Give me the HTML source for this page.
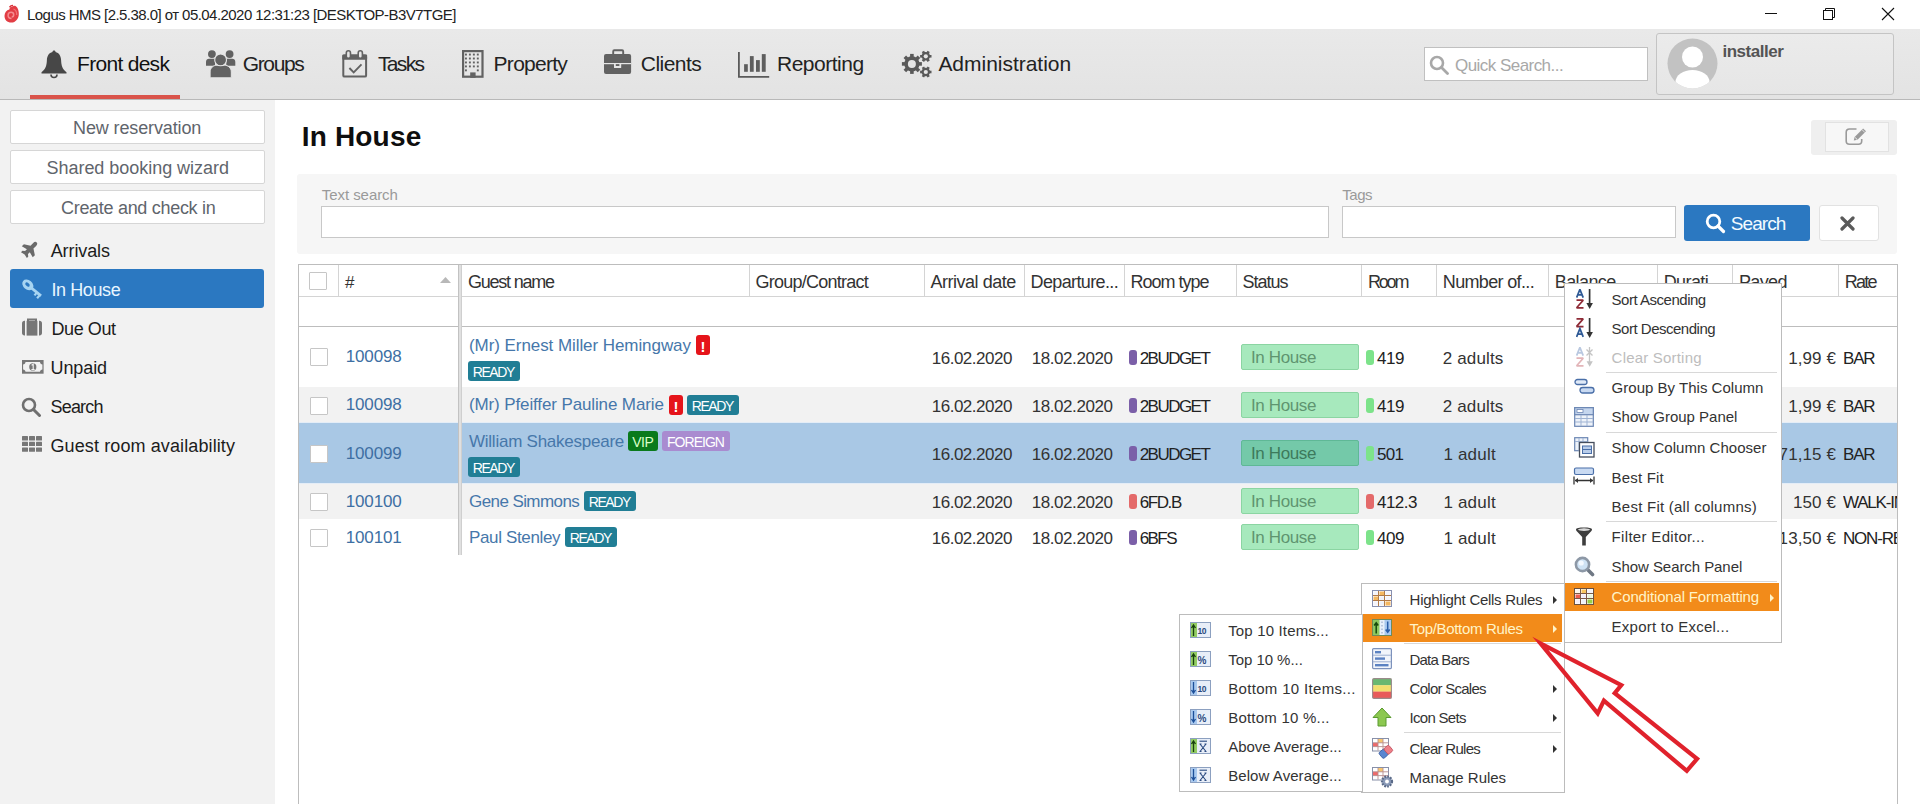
<!DOCTYPE html><html><head><meta charset="utf-8"><style>
html,body{margin:0;padding:0;width:1920px;height:804px;overflow:hidden;background:#fff}
body{position:relative;font-family:"Liberation Sans",sans-serif}
.r{position:absolute;display:block}
.t{position:absolute;white-space:nowrap;line-height:1}
.clip{position:absolute;overflow:hidden}
</style></head><body>
<div class="r" style="left:0px;top:0px;width:1920px;height:29px;background:#fff"></div>
<svg class="r" style="left:0px;top:0px" width="26" height="28" viewBox="0 0 26 28"><path d="M10 7.5c1.5-.8 3.5-2 5-1.8 2.5 1 4 4.5 3.8 8.5-.2 4.5-3 8.3-7.5 8.3-4.2 0-6.8-3-6.8-6.6 0-3 2-5.6 4.8-6.3z" fill="#e23d44"/><path d="M9.5 7.2c1.2-1.5 2.6-1.8 3.6-1.6" fill="none" stroke="#d8323a" stroke-width="1.4"/><path d="M11.5 18.5c-2 0-3.4-1.4-3.4-3.2s1.4-3 3-3 2.6 1.1 2.6 2.5-1 2.2-2 2.2" fill="none" stroke="#f58c90" stroke-width="1.5"/><path d="M13.5 9c2.2 1 3.4 3.2 3.2 6" fill="none" stroke="#f07075" stroke-width="1.3"/></svg>
<div class="t " style="left:27.00px;top:7.30px;font-size:15px;color:#222;letter-spacing:-0.55px;">Logus HMS [2.5.38.0] от 05.04.2020 12:31:23 [DESKTOP-B3V7TGE]</div>
<div class="r" style="left:1765px;top:13px;width:12px;height:1px;background:#111"></div>
<svg class="r" style="left:1822px;top:7px" width="14" height="14" viewBox="0 0 14 14"><rect x="1.5" y="3.5" width="9" height="9" fill="none" stroke="#111" stroke-width="1"/><path d="M3.5 3.5V1.5h9v9h-2" fill="none" stroke="#111" stroke-width="1"/></svg>
<svg class="r" style="left:1881px;top:7px" width="14" height="14" viewBox="0 0 14 14"><path d="M1 1L13 13M13 1L1 13" stroke="#111" stroke-width="1.1"/></svg>
<div class="r" style="left:0px;top:29px;width:1920px;height:70px;background:linear-gradient(#e9e9e9,#e3e3e3)"></div>
<div class="r" style="left:0px;top:99px;width:1920px;height:1px;background:#b8b8b8"></div>
<div class="r" style="left:30px;top:95px;width:150px;height:4px;background:#d9534a"></div>
<svg class="r" style="left:40px;top:49px" width="28" height="30" viewBox="0 0 28 30"><path d="M14 1.5c1 0 1.5.6 1.5 1.4 3.6.8 5.4 4 5.6 8 .2 5.5 1.2 9 5.4 12.3v1.3H1.5v-1.3C5.7 20 6.7 16.5 6.9 11c.2-4 2-7.2 5.6-8 0-.8.5-1.4 1.5-1.4z" fill="#474747"/><path d="M11 25.5a3 3 0 0 0 6 0" fill="none" stroke="#474747" stroke-width="1.6"/></svg>
<div class="t " style="left:77.00px;top:53.22px;font-size:21px;color:#111;letter-spacing:-0.7px;">Front desk</div>
<svg class="r" style="left:200px;top:46px" width="40" height="36" viewBox="0 0 40 36"><g fill="#626262"><circle cx="11.9" cy="8.1" r="3.9"/><circle cx="29.6" cy="8.1" r="3.9"/><path d="M6 19.7V16c0-2 1.3-3.2 3-3.2h6v6.9z"/><path d="M35.3 19.7V16c0-2-1.3-3.2-3-3.2h-6v6.9z"/></g><path d="M10.1 31.8V26c0-4.2 3.3-6.8 7-6.8h7.2c3.7 0 7 2.6 7 6.8v5.8z" fill="#626262" stroke="#e6e6e6" stroke-width="1"/><circle cx="20.6" cy="13.9" r="5.9" fill="#626262" stroke="#e6e6e6" stroke-width="1.1"/></svg>
<div class="t " style="left:242.80px;top:53.22px;font-size:21px;color:#222;letter-spacing:-1.38px;">Groups</div>
<svg class="r" style="left:338px;top:46px" width="34" height="36" viewBox="0 0 34 36"><rect x="5.3" y="9.5" width="22.8" height="21.1" rx="1.2" fill="none" stroke="#626262" stroke-width="2"/><rect x="4.3" y="8.5" width="24.8" height="5.3" rx="1" fill="#626262"/><g fill="#e6e6e6" stroke="#626262" stroke-width="1.6"><rect x="8.3" y="4.8" width="4.2" height="7.5" rx="2.1"/><rect x="20.2" y="4.8" width="4.2" height="7.5" rx="2.1"/></g><path d="M11.4 22l4.3 4.3 7.8-7.9" fill="none" stroke="#626262" stroke-width="1.9"/></svg>
<div class="t " style="left:378.00px;top:53.22px;font-size:21px;color:#222;letter-spacing:-1.675px;">Tasks</div>
<svg class="r" style="left:461px;top:49px" width="24" height="30" viewBox="0 0 24 30"><rect x="2.1" y="2.1" width="19.4" height="25.6" fill="none" stroke="#626262" stroke-width="2.2"/><g fill="#626262"><rect x="4.00" y="4.60" width="1.9" height="1.9"/><rect x="7.95" y="4.60" width="1.9" height="1.9"/><rect x="11.90" y="4.60" width="1.9" height="1.9"/><rect x="15.85" y="4.60" width="1.9" height="1.9"/><rect x="4.00" y="8.55" width="1.9" height="1.9"/><rect x="7.95" y="8.55" width="1.9" height="1.9"/><rect x="11.90" y="8.55" width="1.9" height="1.9"/><rect x="15.85" y="8.55" width="1.9" height="1.9"/><rect x="4.00" y="12.50" width="1.9" height="1.9"/><rect x="7.95" y="12.50" width="1.9" height="1.9"/><rect x="11.90" y="12.50" width="1.9" height="1.9"/><rect x="15.85" y="12.50" width="1.9" height="1.9"/><rect x="4.00" y="16.45" width="1.9" height="1.9"/><rect x="7.95" y="16.45" width="1.9" height="1.9"/><rect x="11.90" y="16.45" width="1.9" height="1.9"/><rect x="15.85" y="16.45" width="1.9" height="1.9"/><rect x="4.00" y="20.40" width="1.9" height="1.9"/><rect x="15.85" y="20.40" width="1.9" height="1.9"/><rect x="9.2" y="23.4" width="5.4" height="5.4"/></g></svg>
<div class="t " style="left:493.60px;top:53.22px;font-size:21px;color:#222;letter-spacing:-0.729px;">Property</div>
<svg class="r" style="left:600px;top:46px" width="36" height="34" viewBox="0 0 36 34"><path d="M13.2 8.5V5.4c0-.7.4-1.1 1.1-1.1h7.8c.7 0 1.1.4 1.1 1.1v3.1" fill="none" stroke="#626262" stroke-width="1.9"/><rect x="4" y="8" width="27.1" height="20" rx="2" fill="#626262"/><rect x="4" y="17" width="27.1" height="1.2" fill="#e6e6e6"/><rect x="14" y="17.5" width="7.2" height="4.6" rx=".6" fill="#e6e6e6"/><rect x="15.8" y="18.1" width="3.6" height="1.9" fill="#626262"/></svg>
<div class="t " style="left:640.80px;top:53.22px;font-size:21px;color:#222;letter-spacing:-0.533px;">Clients</div>
<svg class="r" style="left:734px;top:46px" width="40" height="36" viewBox="0 0 40 36"><path d="M4.9 6v24.9H35.2" fill="none" stroke="#5a5a5a" stroke-width="1.8"/><g fill="#5e5e5e"><rect x="10.1" y="18.2" width="3.7" height="7.6"/><rect x="15.9" y="10.1" width="3.8" height="15.7"/><rect x="22" y="14.1" width="3.8" height="11.7"/><rect x="27.8" y="8.1" width="3.9" height="17.7"/></g></svg>
<div class="t " style="left:777.00px;top:53.22px;font-size:21px;color:#222;letter-spacing:-0.487px;">Reporting</div>
<svg class="r" style="left:898px;top:46px" width="38" height="36" viewBox="0 0 38 36"><circle cx="13.9" cy="17.9" r="7.6" fill="#5a5a5a"/><rect x="12.1" y="7.899999999999999" width="3.6" height="10" fill="#5a5a5a" transform="rotate(0.0 13.9 17.9)"/><rect x="12.1" y="7.899999999999999" width="3.6" height="10" fill="#5a5a5a" transform="rotate(45.0 13.9 17.9)"/><rect x="12.1" y="7.899999999999999" width="3.6" height="10" fill="#5a5a5a" transform="rotate(90.0 13.9 17.9)"/><rect x="12.1" y="7.899999999999999" width="3.6" height="10" fill="#5a5a5a" transform="rotate(135.0 13.9 17.9)"/><rect x="12.1" y="7.899999999999999" width="3.6" height="10" fill="#5a5a5a" transform="rotate(180.0 13.9 17.9)"/><rect x="12.1" y="7.899999999999999" width="3.6" height="10" fill="#5a5a5a" transform="rotate(225.0 13.9 17.9)"/><rect x="12.1" y="7.899999999999999" width="3.6" height="10" fill="#5a5a5a" transform="rotate(270.0 13.9 17.9)"/><rect x="12.1" y="7.899999999999999" width="3.6" height="10" fill="#5a5a5a" transform="rotate(315.0 13.9 17.9)"/><circle cx="13.9" cy="17.9" r="4" fill="#e6e6e6"/><circle cx="27.8" cy="10.3" r="4.2" fill="#5a5a5a"/><rect x="26.5" y="4.6000000000000005" width="2.6" height="5.7" fill="#5a5a5a" transform="rotate(30.0 27.8 10.3)"/><rect x="26.5" y="4.6000000000000005" width="2.6" height="5.7" fill="#5a5a5a" transform="rotate(90.0 27.8 10.3)"/><rect x="26.5" y="4.6000000000000005" width="2.6" height="5.7" fill="#5a5a5a" transform="rotate(150.0 27.8 10.3)"/><rect x="26.5" y="4.6000000000000005" width="2.6" height="5.7" fill="#5a5a5a" transform="rotate(210.0 27.8 10.3)"/><rect x="26.5" y="4.6000000000000005" width="2.6" height="5.7" fill="#5a5a5a" transform="rotate(270.0 27.8 10.3)"/><rect x="26.5" y="4.6000000000000005" width="2.6" height="5.7" fill="#5a5a5a" transform="rotate(330.0 27.8 10.3)"/><circle cx="27.8" cy="10.3" r="2.1" fill="#e6e6e6"/><circle cx="27.8" cy="26" r="4.2" fill="#5a5a5a"/><rect x="26.5" y="20.3" width="2.6" height="5.7" fill="#5a5a5a" transform="rotate(30.0 27.8 26)"/><rect x="26.5" y="20.3" width="2.6" height="5.7" fill="#5a5a5a" transform="rotate(90.0 27.8 26)"/><rect x="26.5" y="20.3" width="2.6" height="5.7" fill="#5a5a5a" transform="rotate(150.0 27.8 26)"/><rect x="26.5" y="20.3" width="2.6" height="5.7" fill="#5a5a5a" transform="rotate(210.0 27.8 26)"/><rect x="26.5" y="20.3" width="2.6" height="5.7" fill="#5a5a5a" transform="rotate(270.0 27.8 26)"/><rect x="26.5" y="20.3" width="2.6" height="5.7" fill="#5a5a5a" transform="rotate(330.0 27.8 26)"/><circle cx="27.8" cy="26" r="2.1" fill="#e6e6e6"/></svg>
<div class="t " style="left:938.40px;top:53.22px;font-size:21px;color:#222;letter-spacing:-0.023px;">Administration</div>
<div class="r" style="left:1424px;top:47px;width:224px;height:34px;background:#fff;border:1px solid #c0c0c0;box-sizing:border-box"></div>
<svg class="r" style="left:1429px;top:55px" width="21" height="20" viewBox="0 0 21 20"><circle cx="8" cy="8" r="6" fill="none" stroke="#a8a8a8" stroke-width="2.6"/><path d="M12.5 12.5L18.5 18.5" stroke="#a8a8a8" stroke-width="2.8" stroke-linecap="round"/></svg>
<div class="t " style="left:1455.00px;top:56.61px;font-size:17px;color:#a8a8a8;letter-spacing:-0.543px;">Quick Search...</div>
<div class="r" style="left:1656px;top:33px;width:238px;height:62px;background:linear-gradient(#ebebeb,#e6e6e6);border:1px solid #c4c4c4;border-radius:3px;box-sizing:border-box"></div>
<svg class="r" style="left:1667px;top:38px" width="51" height="51" viewBox="0 0 51 51"><defs><clipPath id="av"><circle cx="25.5" cy="25.5" r="25"/></clipPath></defs><circle cx="25.5" cy="25.5" r="25" fill="#c2c2c2"/><g clip-path="url(#av)" fill="#fff"><circle cx="25.5" cy="19" r="10.5"/><ellipse cx="25.5" cy="44" rx="17" ry="12"/></g></svg>
<div class="t " style="left:1722.40px;top:43.11px;font-size:17px;color:#545454;font-weight:bold;letter-spacing:-0.475px;">installer</div>
<div class="r" style="left:0px;top:100px;width:275px;height:704px;background:#f2f2f2"></div>
<div class="r" style="left:10px;top:110px;width:255px;height:34px;background:#fff;border:1px solid #d6d6d6;border-radius:2px;box-sizing:border-box"></div>
<div class="t " style="left:73.00px;top:118.56px;font-size:18px;color:#5f656c;letter-spacing:-0.121px;">New reservation</div>
<div class="r" style="left:10px;top:150px;width:255px;height:34px;background:#fff;border:1px solid #d6d6d6;border-radius:2px;box-sizing:border-box"></div>
<div class="t " style="left:46.50px;top:158.56px;font-size:18px;color:#5f656c;letter-spacing:-0.035px;">Shared booking wizard</div>
<div class="r" style="left:10px;top:190px;width:255px;height:34px;background:#fff;border:1px solid #d6d6d6;border-radius:2px;box-sizing:border-box"></div>
<div class="t " style="left:61.00px;top:198.56px;font-size:18px;color:#5f656c;letter-spacing:-0.3px;">Create and check in</div>
<div class="r" style="left:10px;top:269px;width:254px;height:39px;background:#2b78c1;border-radius:3px"></div>
<div class="t " style="left:50.70px;top:241.76px;font-size:18px;color:#1c1c1c;letter-spacing:-0.1px;">Arrivals</div>
<div class="t " style="left:51.50px;top:280.76px;font-size:18px;color:#e8f6ff;letter-spacing:-0.414px;">In House</div>
<div class="t " style="left:51.50px;top:319.76px;font-size:18px;color:#1c1c1c;letter-spacing:-0.417px;">Due Out</div>
<div class="t " style="left:50.50px;top:358.76px;font-size:18px;color:#1c1c1c;letter-spacing:-0.1px;">Unpaid</div>
<div class="t " style="left:50.50px;top:397.76px;font-size:18px;color:#1c1c1c;letter-spacing:-0.82px;">Search</div>
<div class="t " style="left:50.50px;top:436.76px;font-size:18px;color:#1c1c1c;letter-spacing:0.109px;">Guest room availability</div>
<svg class="r" style="left:18px;top:236px" width="28" height="28" viewBox="0 0 28 28"><path transform="translate(12.3 12.8) rotate(45) scale(0.86)" d="M0 -10.5C1.6 -10.5 2.4 -9 2.4 -7.2V-2.8L9 1.5V5L2.4 3.2V6.2L4.8 8.2V10.5L0 9.3L-4.8 10.5V8.2L-2.4 6.2V3.2L-9 5V1.5L-2.4 -2.8V-7.2C-2.4 -9 -1.6 -10.5 0 -10.5z" fill="#6a6a6a"/></svg>
<svg class="r" style="left:18px;top:276px" width="28" height="26" viewBox="0 0 28 26"><g transform="rotate(40 10 9)"><ellipse cx="9.8" cy="9" rx="6.2" ry="4.6" fill="#a6d4f2"/><ellipse cx="9.3" cy="9" rx="2.6" ry="1.6" fill="#2b78c1"/><rect x="15" y="7.6" width="12" height="2.9" fill="#a6d4f2"/><rect x="20.5" y="9.5" width="2.2" height="3.3" fill="#a6d4f2"/><rect x="24.4" y="9.5" width="2.2" height="3.8" fill="#a6d4f2"/></g></svg>
<svg class="r" style="left:18px;top:314px" width="30" height="26" viewBox="0 0 30 26"><path d="M10 7.5V5.5h8v2" fill="none" stroke="#767676" stroke-width="2"/><rect x="8.6" y="6.8" width="10.8" height="14.8" fill="#767676"/><path d="M7 6.8H6.5C5 6.8 4 7.8 4 9.3v9.8c0 1.5 1 2.5 2.5 2.5H7z" fill="#767676"/><path d="M21 6.8h.5c1.5 0 2.5 1 2.5 2.5v9.8c0 1.5-1 2.5-2.5 2.5H21z" fill="#767676"/></svg>
<svg class="r" style="left:18px;top:356px" width="30" height="22" viewBox="0 0 30 22"><rect x="4" y="4" width="21.6" height="13.7" fill="#777"/><path d="M7.5 6h14.5c0 1.3 1.1 2.4 2.4 2.4v5c-1.3 0-2.4 1.1-2.4 2.4H7.5c0-1.3-1.1-2.4-2.4-2.4v-5c1.3 0 2.4-1.1 2.4-2.4z" fill="#f2f2f2"/><circle cx="14.8" cy="10.9" r="3.6" fill="#777"/><path d="M13.6 9.2l1.6-1v5.2M13.4 13.5h3.2" stroke="#f2f2f2" stroke-width="1.1" fill="none"/></svg>
<svg class="r" style="left:21px;top:397px" width="21" height="20" viewBox="0 0 21 20"><circle cx="8" cy="8" r="6" fill="none" stroke="#707070" stroke-width="2.6"/><path d="M12.5 12.5L18.5 18.5" stroke="#707070" stroke-width="3" stroke-linecap="round"/></svg>
<svg class="r" style="left:21px;top:435px" width="22" height="18" viewBox="0 0 22 18"><g fill="#777"><rect x="1" y="1.0" width="6" height="4.4" rx=".5"/><rect x="8" y="1.0" width="6" height="4.4" rx=".5"/><rect x="15" y="1.0" width="6" height="4.4" rx=".5"/><rect x="1" y="6.7" width="6" height="4.4" rx=".5"/><rect x="8" y="6.7" width="6" height="4.4" rx=".5"/><rect x="15" y="6.7" width="6" height="4.4" rx=".5"/><rect x="1" y="12.4" width="6" height="4.4" rx=".5"/><rect x="8" y="12.4" width="6" height="4.4" rx=".5"/><rect x="15" y="12.4" width="6" height="4.4" rx=".5"/></g></svg>
<div class="t " style="left:301.70px;top:123.30px;font-size:28px;color:#0e0e0e;font-weight:bold;letter-spacing:0.186px;">In House</div>
<div class="r" style="left:1811px;top:120px;width:86px;height:35px;background:#efefef;border-radius:3px"></div>
<div class="r" style="left:1825px;top:122px;width:64px;height:30px;background:#f7f7f7;border:1px solid #e2e2e2;box-sizing:border-box"></div>
<svg class="r" style="left:1836px;top:120px" width="40" height="32" viewBox="0 0 40 32"><path d="M20.5 9H13.5c-2 0-3.3 1.3-3.3 3.3v8.6c0 2 1.3 3.3 3.3 3.3h8.9c2 0 3.3-1.3 3.3-3.3V19" fill="none" stroke="#9a9a9a" stroke-width="1.6"/><path d="M17.8 20.5l.8-3.6 8.5-8.5 2.9 2.9-8.5 8.5z" fill="#9a9a9a"/><path d="M19.2 17.6l2.3 2.3" stroke="#f7f7f7" stroke-width="1"/><path d="M26 9.6l2.9 2.9" stroke="#f7f7f7" stroke-width=".8"/></svg>
<div class="r" style="left:297px;top:174px;width:1600px;height:80px;background:#f6f6f6;border-radius:3px"></div>
<div class="t " style="left:321.80px;top:187.30px;font-size:15px;color:#9a9a9a;letter-spacing:-0.06px;">Text search</div>
<div class="r" style="left:321px;top:206px;width:1008px;height:32px;background:#fff;border:1px solid #c8c8c8;box-sizing:border-box"></div>
<div class="t " style="left:1342.30px;top:187.30px;font-size:15px;color:#9a9a9a;letter-spacing:-0.5px;">Tags</div>
<div class="r" style="left:1342px;top:206px;width:334px;height:32px;background:#fff;border:1px solid #c8c8c8;box-sizing:border-box"></div>
<div class="r" style="left:1684px;top:205px;width:126px;height:36px;background:#2b78c1;border-radius:3px"></div>
<svg class="r" style="left:1705px;top:213px" width="21" height="21" viewBox="0 0 21 21"><circle cx="8.5" cy="8.5" r="6.3" fill="none" stroke="#fff" stroke-width="2.8"/><path d="M13 13l5.5 5.5" stroke="#fff" stroke-width="3.2" stroke-linecap="round"/></svg>
<div class="t " style="left:1730.70px;top:213.92px;font-size:19px;color:#f2fbff;letter-spacing:-0.9px;">Search</div>
<div class="r" style="left:1819px;top:205px;width:60px;height:36px;background:#fff;border:1px solid #e2e2e2;border-radius:3px;box-sizing:border-box"></div>
<svg class="r" style="left:1840px;top:216px" width="15" height="15" viewBox="0 0 15 15"><path d="M2 2L13 13M13 2L2 13" stroke="#5a5a5a" stroke-width="3.2" stroke-linecap="round"/></svg>
<div class="r" style="left:298px;top:264px;width:1600px;height:540px;background:#fff;border:1px solid #bdbdbd;border-bottom:none;box-sizing:border-box"></div>
<div class="r" style="left:299px;top:296px;width:1598px;height:1px;background:#d4d4d4"></div>
<div class="r" style="left:299px;top:326px;width:1598px;height:1px;background:#bdbdbd"></div>
<div class="r" style="left:338px;top:265px;width:1px;height:31px;background:#d4d4d4"></div>
<div class="r" style="left:749px;top:265px;width:1px;height:31px;background:#d4d4d4"></div>
<div class="r" style="left:924px;top:265px;width:1px;height:31px;background:#d4d4d4"></div>
<div class="r" style="left:1024px;top:265px;width:1px;height:31px;background:#d4d4d4"></div>
<div class="r" style="left:1124px;top:265px;width:1px;height:31px;background:#d4d4d4"></div>
<div class="r" style="left:1236px;top:265px;width:1px;height:31px;background:#d4d4d4"></div>
<div class="r" style="left:1361px;top:265px;width:1px;height:31px;background:#d4d4d4"></div>
<div class="r" style="left:1436px;top:265px;width:1px;height:31px;background:#d4d4d4"></div>
<div class="r" style="left:1548px;top:265px;width:1px;height:31px;background:#d4d4d4"></div>
<div class="r" style="left:1657px;top:265px;width:1px;height:31px;background:#d4d4d4"></div>
<div class="r" style="left:1732px;top:265px;width:1px;height:31px;background:#d4d4d4"></div>
<div class="r" style="left:1838px;top:265px;width:1px;height:31px;background:#d4d4d4"></div>
<div class="r" style="left:299px;top:327px;width:1598px;height:60px;background:#fff"></div>
<div class="r" style="left:299px;top:387px;width:1598px;height:36px;background:#f2f2f2"></div>
<div class="r" style="left:299px;top:423px;width:1598px;height:60px;background:#a9c8e5"></div>
<div class="r" style="left:299px;top:483px;width:1598px;height:36px;background:#f2f2f2"></div>
<div class="r" style="left:299px;top:519px;width:1598px;height:36px;background:#fff"></div>
<div class="r" style="left:299px;top:422px;width:1598px;height:1px;background:#e4edf7"></div>
<div class="r" style="left:299px;top:483px;width:1598px;height:1px;background:#e4edf7"></div>
<div class="r" style="left:458px;top:265px;width:4px;height:290px;border-left:1px solid #c2c2c2;border-right:1px solid #cfcfcf;box-sizing:border-box;background:#e0e0e0"></div>
<div class="r" style="left:309px;top:272px;width:18px;height:18px;background:#fff;border:1.5px solid #c6c6c6;border-radius:1px;box-sizing:border-box"></div>
<div class="t " style="left:345.00px;top:273.61px;font-size:17px;color:#333;">#</div>
<svg class="r" style="left:440px;top:277px" width="11" height="6" viewBox="0 0 11 6"><path d="M0 6L5.5 0 11 6z" fill="#b8b8b8"/></svg>
<div class="t " style="left:468.00px;top:272.76px;font-size:18px;color:#333;letter-spacing:-1.233px;">Guest name</div>
<div class="t " style="left:755.50px;top:272.76px;font-size:18px;color:#333;letter-spacing:-0.762px;">Group/Contract</div>
<div class="t " style="left:930.50px;top:272.76px;font-size:18px;color:#333;letter-spacing:-0.482px;">Arrival date</div>
<div class="t " style="left:1030.50px;top:272.76px;font-size:18px;color:#333;letter-spacing:-0.618px;">Departure...</div>
<div class="t " style="left:1130.50px;top:272.76px;font-size:18px;color:#333;letter-spacing:-1.0px;">Room type</div>
<div class="t " style="left:1242.50px;top:272.76px;font-size:18px;color:#333;letter-spacing:-1.02px;">Status</div>
<div class="t " style="left:1368.00px;top:272.76px;font-size:18px;color:#333;letter-spacing:-2.2px;">Room</div>
<div class="t " style="left:1442.80px;top:272.76px;font-size:18px;color:#333;letter-spacing:-0.655px;">Number of...</div>
<div class="t " style="left:1554.80px;top:272.76px;font-size:18px;color:#333;letter-spacing:-0.6px;">Balance</div>
<div class="t " style="left:1663.70px;top:272.76px;font-size:18px;color:#333;letter-spacing:-0.6px;">Durati</div>
<div class="t " style="left:1738.90px;top:272.76px;font-size:18px;color:#333;letter-spacing:-0.6px;">Payed</div>
<div class="t " style="left:1844.80px;top:272.76px;font-size:18px;color:#333;letter-spacing:-1.8px;">Rate</div>
<div class="r" style="left:310px;top:348px;width:18px;height:18px;background:#fff;border:1.5px solid #c6c6c6;border-radius:1px;box-sizing:border-box"></div>
<div class="t " style="left:345.70px;top:348.11px;font-size:17px;color:#3e6fa3;letter-spacing:-0.14px;">100098</div>
<div class="t " style="left:469.00px;top:336.61px;font-size:17px;color:#4677aa;letter-spacing:-0.07px;">(Mr) Ernest Miller Hemingway</div>
<div class="t " style="left:931.70px;top:349.61px;font-size:17px;color:#333;letter-spacing:-0.478px;">16.02.2020</div>
<div class="t " style="left:1031.70px;top:349.61px;font-size:17px;color:#333;letter-spacing:-0.422px;">18.02.2020</div>
<div class="r" style="left:1129px;top:350px;width:8px;height:15px;background:#7b5fa8;border-radius:3px"></div>
<div class="t " style="left:1139.70px;top:349.61px;font-size:17px;color:#222;letter-spacing:-1.533px;">2BUDGET</div>
<div class="r" style="left:1241px;top:344px;width:118px;height:26px;background:#a7e9bd;border:1px solid #8bd5a2;border-radius:2px;box-sizing:border-box"></div>
<div class="t " style="left:1250.90px;top:348.61px;font-size:17px;color:#5f9570;letter-spacing:-0.357px;">In House</div>
<div class="r" style="left:1366px;top:350px;width:8px;height:15px;background:#7de38a;border-radius:3px"></div>
<div class="t " style="left:1377.00px;top:349.61px;font-size:17px;color:#222;letter-spacing:-0.5px;">419</div>
<div class="t " style="left:1442.80px;top:349.61px;font-size:17px;color:#333;letter-spacing:0.143px;">2 adults</div>
<div class="t" style="right:84px;top:349.61px;font-size:17px;color:#333;letter-spacing:0.1px">1,99 €</div>
<div class="clip" style="left:1843px;top:344px;width:54px;height:26px"><div class="t" style="left:0;top:5.61px;font-size:17px;color:#222;letter-spacing:-1.2px">BAR</div></div>
<div class="r" style="left:310px;top:397px;width:18px;height:18px;background:#fff;border:1.5px solid #c6c6c6;border-radius:1px;box-sizing:border-box"></div>
<div class="t " style="left:345.70px;top:396.11px;font-size:17px;color:#3e6fa3;letter-spacing:-0.14px;">100098</div>
<div class="t " style="left:469.00px;top:396.11px;font-size:17px;color:#4677aa;letter-spacing:-0.123px;">(Mr) Pfeiffer Pauline Marie</div>
<div class="t " style="left:931.70px;top:397.61px;font-size:17px;color:#333;letter-spacing:-0.478px;">16.02.2020</div>
<div class="t " style="left:1031.70px;top:397.61px;font-size:17px;color:#333;letter-spacing:-0.422px;">18.02.2020</div>
<div class="r" style="left:1129px;top:398px;width:8px;height:15px;background:#7b5fa8;border-radius:3px"></div>
<div class="t " style="left:1139.70px;top:397.61px;font-size:17px;color:#222;letter-spacing:-1.533px;">2BUDGET</div>
<div class="r" style="left:1241px;top:392px;width:118px;height:26px;background:#a7e9bd;border:1px solid #8bd5a2;border-radius:2px;box-sizing:border-box"></div>
<div class="t " style="left:1250.90px;top:396.61px;font-size:17px;color:#5f9570;letter-spacing:-0.357px;">In House</div>
<div class="r" style="left:1366px;top:398px;width:8px;height:15px;background:#7de38a;border-radius:3px"></div>
<div class="t " style="left:1377.00px;top:397.61px;font-size:17px;color:#222;letter-spacing:-0.5px;">419</div>
<div class="t " style="left:1442.80px;top:397.61px;font-size:17px;color:#333;letter-spacing:0.143px;">2 adults</div>
<div class="t" style="right:84px;top:397.61px;font-size:17px;color:#333;letter-spacing:0.1px">1,99 €</div>
<div class="clip" style="left:1843px;top:392px;width:54px;height:26px"><div class="t" style="left:0;top:5.61px;font-size:17px;color:#222;letter-spacing:-1.2px">BAR</div></div>
<div class="r" style="left:310px;top:445px;width:18px;height:18px;background:#fff;border:1.5px solid #c6c6c6;border-radius:1px;box-sizing:border-box"></div>
<div class="t " style="left:345.70px;top:444.61px;font-size:17px;color:#3e6fa3;letter-spacing:-0.14px;">100099</div>
<div class="t " style="left:469.00px;top:432.61px;font-size:17px;color:#4677aa;letter-spacing:-0.244px;">William Shakespeare</div>
<div class="t " style="left:931.70px;top:445.61px;font-size:17px;color:#333;letter-spacing:-0.478px;">16.02.2020</div>
<div class="t " style="left:1031.70px;top:445.61px;font-size:17px;color:#333;letter-spacing:-0.422px;">16.02.2020</div>
<div class="r" style="left:1129px;top:446px;width:8px;height:15px;background:#7b5fa8;border-radius:3px"></div>
<div class="t " style="left:1139.70px;top:445.61px;font-size:17px;color:#222;letter-spacing:-1.533px;">2BUDGET</div>
<div class="r" style="left:1241px;top:440px;width:118px;height:26px;background:#74c9a9;border:1px solid #5fb896;border-radius:2px;box-sizing:border-box"></div>
<div class="t " style="left:1250.90px;top:444.61px;font-size:17px;color:#3d7a5c;letter-spacing:-0.357px;">In House</div>
<div class="r" style="left:1366px;top:446px;width:8px;height:15px;background:#7de38a;border-radius:3px"></div>
<div class="t " style="left:1377.00px;top:445.61px;font-size:17px;color:#222;letter-spacing:-0.75px;">501</div>
<div class="t " style="left:1443.40px;top:445.61px;font-size:17px;color:#333;letter-spacing:0.2px;">1 adult</div>
<div class="t" style="right:84px;top:445.61px;font-size:17px;color:#333;letter-spacing:0.1px">71,15 €</div>
<div class="clip" style="left:1843px;top:440px;width:54px;height:26px"><div class="t" style="left:0;top:5.61px;font-size:17px;color:#222;letter-spacing:-1.2px">BAR</div></div>
<div class="r" style="left:310px;top:493px;width:18px;height:18px;background:#fff;border:1.5px solid #c6c6c6;border-radius:1px;box-sizing:border-box"></div>
<div class="t " style="left:345.70px;top:492.61px;font-size:17px;color:#3e6fa3;letter-spacing:-0.14px;">100100</div>
<div class="t " style="left:469.00px;top:492.61px;font-size:17px;color:#4677aa;letter-spacing:-0.582px;">Gene Simmons</div>
<div class="t " style="left:931.70px;top:493.61px;font-size:17px;color:#333;letter-spacing:-0.478px;">16.02.2020</div>
<div class="t " style="left:1031.70px;top:493.61px;font-size:17px;color:#333;letter-spacing:-0.422px;">18.02.2020</div>
<div class="r" style="left:1129px;top:494px;width:8px;height:15px;background:#e46a6a;border-radius:3px"></div>
<div class="t " style="left:1139.70px;top:493.61px;font-size:17px;color:#222;letter-spacing:-1.4px;">6FD.B</div>
<div class="r" style="left:1241px;top:488px;width:118px;height:26px;background:#a7e9bd;border:1px solid #8bd5a2;border-radius:2px;box-sizing:border-box"></div>
<div class="t " style="left:1250.90px;top:492.61px;font-size:17px;color:#5f9570;letter-spacing:-0.357px;">In House</div>
<div class="r" style="left:1366px;top:494px;width:8px;height:15px;background:#e46a6a;border-radius:3px"></div>
<div class="t " style="left:1377.00px;top:493.61px;font-size:17px;color:#222;letter-spacing:-0.525px;">412.3</div>
<div class="t " style="left:1443.40px;top:493.61px;font-size:17px;color:#333;letter-spacing:0.2px;">1 adult</div>
<div class="t" style="right:84px;top:493.61px;font-size:17px;color:#333;letter-spacing:0.1px">150 €</div>
<div class="clip" style="left:1843px;top:488px;width:54px;height:26px"><div class="t" style="left:0;top:5.61px;font-size:17px;color:#222;letter-spacing:-1.2px">WALK-IN</div></div>
<div class="r" style="left:310px;top:529px;width:18px;height:18px;background:#fff;border:1.5px solid #c6c6c6;border-radius:1px;box-sizing:border-box"></div>
<div class="t " style="left:345.70px;top:528.61px;font-size:17px;color:#3e6fa3;letter-spacing:-0.14px;">100101</div>
<div class="t " style="left:469.00px;top:528.61px;font-size:17px;color:#4677aa;letter-spacing:-0.355px;">Paul Stenley</div>
<div class="t " style="left:931.70px;top:529.61px;font-size:17px;color:#333;letter-spacing:-0.478px;">16.02.2020</div>
<div class="t " style="left:1031.70px;top:529.61px;font-size:17px;color:#333;letter-spacing:-0.422px;">18.02.2020</div>
<div class="r" style="left:1129px;top:530px;width:8px;height:15px;background:#7b5fa8;border-radius:3px"></div>
<div class="t " style="left:1139.70px;top:529.61px;font-size:17px;color:#222;letter-spacing:-1.567px;">6BFS</div>
<div class="r" style="left:1241px;top:524px;width:118px;height:26px;background:#a7e9bd;border:1px solid #8bd5a2;border-radius:2px;box-sizing:border-box"></div>
<div class="t " style="left:1250.90px;top:528.61px;font-size:17px;color:#5f9570;letter-spacing:-0.357px;">In House</div>
<div class="r" style="left:1366px;top:530px;width:8px;height:15px;background:#7de38a;border-radius:3px"></div>
<div class="t " style="left:1377.00px;top:529.61px;font-size:17px;color:#222;letter-spacing:-0.5px;">409</div>
<div class="t " style="left:1443.40px;top:529.61px;font-size:17px;color:#333;letter-spacing:0.2px;">1 adult</div>
<div class="t" style="right:84px;top:529.61px;font-size:17px;color:#333;letter-spacing:0.1px">13,50 €</div>
<div class="clip" style="left:1843px;top:524px;width:54px;height:26px"><div class="t" style="left:0;top:5.61px;font-size:17px;color:#222;letter-spacing:-1.2px">NON-REF</div></div>
<div class="r" style="left:696px;top:335px;width:14px;height:20px;background:#e5141a;border-radius:3px"></div>
<div class="t" style="left:696px;width:14px;text-align:center;top:339.30px;font-size:15px;color:#fff;font-weight:bold">!</div>
<div class="r" style="left:468px;top:361px;width:52px;height:20px;background:#217e95;border-radius:3px"></div>
<div class="t " style="left:472.65px;top:365.15px;font-size:14px;color:#fff;letter-spacing:-1.375px;">READY</div>
<div class="r" style="left:669px;top:395px;width:14px;height:20px;background:#e5141a;border-radius:3px"></div>
<div class="t" style="left:669px;width:14px;text-align:center;top:399.30px;font-size:15px;color:#fff;font-weight:bold">!</div>
<div class="r" style="left:687px;top:395px;width:52px;height:20px;background:#217e95;border-radius:3px"></div>
<div class="t " style="left:691.65px;top:399.15px;font-size:14px;color:#fff;letter-spacing:-1.375px;">READY</div>
<div class="r" style="left:628px;top:431px;width:30px;height:20px;background:#0a7a1c;border-radius:3px"></div>
<div class="t " style="left:632.25px;top:435.15px;font-size:14px;color:#d9ffc9;letter-spacing:-0.55px;">VIP</div>
<div class="r" style="left:662px;top:431px;width:68px;height:20px;background:#a98bd0;border-radius:3px"></div>
<div class="t " style="left:667.05px;top:435.15px;font-size:14px;color:#fff;letter-spacing:-0.983px;">FOREIGN</div>
<div class="r" style="left:468px;top:457px;width:52px;height:20px;background:#217e95;border-radius:3px"></div>
<div class="t " style="left:472.65px;top:461.15px;font-size:14px;color:#fff;letter-spacing:-1.375px;">READY</div>
<div class="r" style="left:584px;top:491px;width:52px;height:20px;background:#217e95;border-radius:3px"></div>
<div class="t " style="left:588.65px;top:495.15px;font-size:14px;color:#fff;letter-spacing:-1.375px;">READY</div>
<div class="r" style="left:565px;top:527px;width:52px;height:20px;background:#217e95;border-radius:3px"></div>
<div class="t " style="left:569.65px;top:531.15px;font-size:14px;color:#fff;letter-spacing:-1.375px;">READY</div>
<div class="r" style="left:1564px;top:283px;width:218px;height:360px;background:#fff;border:1px solid #bcbcbc;box-sizing:border-box"></div>
<div class="r" style="left:1606px;top:372px;width:171px;height:1px;background:#d8d8d8"></div>
<div class="r" style="left:1606px;top:432px;width:171px;height:1px;background:#d8d8d8"></div>
<div class="r" style="left:1606px;top:521px;width:171px;height:1px;background:#d8d8d8"></div>
<div class="r" style="left:1606px;top:581px;width:171px;height:1px;background:#d8d8d8"></div>
<div class="r" style="left:1565px;top:583px;width:214px;height:28px;background:#f28b1a"></div>
<div class="t " style="left:1611.60px;top:292.30px;font-size:15px;color:#333;letter-spacing:-0.485px;">Sort Ascending</div>
<div class="t " style="left:1611.60px;top:321.30px;font-size:15px;color:#333;letter-spacing:-0.493px;">Sort Descending</div>
<div class="t " style="left:1611.60px;top:350.30px;font-size:15px;color:#bdbdbd;letter-spacing:0.2px;">Clear Sorting</div>
<div class="t " style="left:1611.60px;top:380.30px;font-size:15px;color:#333;letter-spacing:0.016px;">Group By This Column</div>
<div class="t " style="left:1611.60px;top:409.30px;font-size:15px;color:#333;letter-spacing:-0.007px;">Show Group Panel</div>
<div class="t " style="left:1611.60px;top:439.80px;font-size:15px;color:#333;letter-spacing:0.033px;">Show Column Chooser</div>
<div class="t " style="left:1611.60px;top:470.30px;font-size:15px;color:#333;letter-spacing:0.171px;">Best Fit</div>
<div class="t " style="left:1611.60px;top:499.30px;font-size:15px;color:#333;letter-spacing:0.243px;">Best Fit (all columns)</div>
<div class="t " style="left:1611.60px;top:529.30px;font-size:15px;color:#333;letter-spacing:0.32px;">Filter Editor...</div>
<div class="t " style="left:1611.60px;top:558.80px;font-size:15px;color:#333;letter-spacing:-0.069px;">Show Search Panel</div>
<div class="t " style="left:1611.60px;top:618.80px;font-size:15px;color:#333;letter-spacing:0.241px;">Export to Excel...</div>
<div class="t " style="left:1611.60px;top:589.30px;font-size:15px;color:#fff4c8;letter-spacing:-0.162px;">Conditional Formatting</div>
<svg class="r" style="left:1770px;top:594px" width="4" height="8" viewBox="0 0 4 8"><path d="M0 0L4 4 0 8z" fill="#fff4c8"/></svg>
<svg class="r" style="left:1576px;top:289px" width="18" height="21" viewBox="0 0 18 21"><path d="M0.6 8.6L3.9 0.4L7.2 8.6M2 5.9h3.8" fill="none" stroke="#2f5a96" stroke-width="1.75"/><path d="M0.5 11.200000000000001H7.2L0.6 18.8H7.5" fill="none" stroke="#8e2a36" stroke-width="1.75" stroke-linejoin="bevel"/><path d="M13.6 0v15" stroke="#333" stroke-width="1.7"/><path d="M10.4 14h6.5l-3.25 6z" fill="#333"/></svg>
<svg class="r" style="left:1576px;top:318px" width="18" height="21" viewBox="0 0 18 21"><path d="M0.5 0.9H7.2L0.6 8.5H7.5" fill="none" stroke="#8e2a36" stroke-width="1.75" stroke-linejoin="bevel"/><path d="M0.6 18.9L3.9 10.700000000000001L7.2 18.9M2 16.200000000000003h3.8" fill="none" stroke="#2f5a96" stroke-width="1.75"/><path d="M13.6 0v15" stroke="#333" stroke-width="1.7"/><path d="M10.4 14h6.5l-3.25 6z" fill="#333"/></svg>
<svg class="r" style="left:1576px;top:347px" width="18" height="21" viewBox="0 0 18 21"><path d="M0.6 8.6L3.9 0.4L7.2 8.6M2 5.9h3.8" fill="none" stroke="#b9c8e0" stroke-width="1.75"/><path d="M0.5 11.200000000000001H7.2L0.6 18.8H7.5" fill="none" stroke="#e2b4b8" stroke-width="1.75" stroke-linejoin="bevel"/><path d="M10.5 2.5l6 6M16.5 2.5l-6 6M13.5 0v16" stroke="#c4c4c4" stroke-width="1.3" fill="none"/><path d="M10.6 14.2h6.2l-3.1 5.5z" fill="#c4c4c4"/></svg>
<svg class="r" style="left:1574px;top:378px" width="21" height="18" viewBox="0 0 21 18"><rect x="1" y="1.5" width="12" height="5" rx="2.5" fill="#dfe9f7" stroke="#4a6fa8" stroke-width="1.3"/><rect x="6" y="9.5" width="14" height="5.5" rx="2.75" fill="#c9daf2" stroke="#4a6fa8" stroke-width="1.3"/></svg>
<svg class="r" style="left:1574px;top:407px" width="20" height="20" viewBox="0 0 20 20"><rect x="0.7" y="0.7" width="18.6" height="18.6" fill="#eef3fa" stroke="#6b86b3" stroke-width="1.2"/><rect x="0.7" y="0.7" width="18.6" height="7" fill="#c5d6ee" stroke="#6b86b3" stroke-width="1.2"/><rect x="3" y="2.5" width="6" height="3" fill="#fff" stroke="#6b86b3" stroke-width=".8"/><path d="M1 11.5h18M1 15h18M7 8v11M13 8v11" stroke="#9fb3d3" stroke-width="1"/></svg>
<svg class="r" style="left:1574px;top:437px" width="21" height="21" viewBox="0 0 21 21"><rect x="0.7" y="0.7" width="13" height="13" fill="#eef3fa" stroke="#6b86b3" stroke-width="1.2"/><path d="M1 4.5h12.5M5 1v13M9 1v13" stroke="#9fb3d3"/><rect x="5.5" y="5.5" width="14.5" height="14.5" fill="#fff" stroke="#454d5c" stroke-width="1.3"/><rect x="8.5" y="9" width="9" height="7.5" fill="#b9cdea" stroke="#4a6fa8" stroke-width="1"/><path d="M9 12.5h8" stroke="#4a6fa8"/></svg>
<svg class="r" style="left:1573px;top:467px" width="22" height="19" viewBox="0 0 22 19"><rect x="1.5" y="1" width="19" height="6.5" rx="1.5" fill="#c9daf2" stroke="#4a6fa8" stroke-width="1.2"/><path d="M1 9.5v8M21 9.5v8M2 13.5h18" stroke="#333" stroke-width="1.3"/><path d="M2 13.5l3-2.5v5zM20 13.5l-3-2.5v5z" fill="#333"/></svg>
<svg class="r" style="left:1575px;top:527px" width="18" height="19" viewBox="0 0 18 19"><path d="M1 2.5C1 1 4.5.5 9 .5s8 .5 8 2c0 .8-.6 1.5-1.3 2.2L10.8 10v8.5H7.2V10L2.3 4.7C1.6 4 1 3.3 1 2.5z" fill="#3e3e3e"/><ellipse cx="9" cy="2.6" rx="6" ry="1.3" fill="#d8d8d8"/></svg>
<svg class="r" style="left:1574px;top:556px" width="21" height="21" viewBox="0 0 21 21"><path d="M13 13l5.5 5.5" stroke="#6f7884" stroke-width="3.6" stroke-linecap="round"/><circle cx="8.5" cy="8.5" r="6.6" fill="#cfe3f5" stroke="#8d98a6" stroke-width="2.6"/><circle cx="7.2" cy="7" r="2.6" fill="#f4f9ff"/></svg>
<div class="r" style="left:1361px;top:583px;width:204px;height:210px;background:#fff;border:1px solid #bcbcbc;box-sizing:border-box"></div>
<div class="r" style="left:1363px;top:614px;width:199px;height:28px;background:#f28b1a"></div>
<div class="r" style="left:1404px;top:643px;width:157px;height:1px;background:#d8d8d8"></div>
<div class="r" style="left:1404px;top:732px;width:157px;height:1px;background:#d8d8d8"></div>
<div class="t " style="left:1409.60px;top:591.80px;font-size:15px;color:#333;letter-spacing:-0.275px;">Highlight Cells Rules</div>
<svg class="r" style="left:1553px;top:595.5px" width="4" height="8" viewBox="0 0 4 8"><path d="M0 0L4 4 0 8z" fill="#333"/></svg>
<div class="t " style="left:1409.60px;top:651.80px;font-size:15px;color:#333;letter-spacing:-0.825px;">Data Bars</div>
<div class="t " style="left:1409.60px;top:681.30px;font-size:15px;color:#333;letter-spacing:-0.736px;">Color Scales</div>
<svg class="r" style="left:1553px;top:685px" width="4" height="8" viewBox="0 0 4 8"><path d="M0 0L4 4 0 8z" fill="#333"/></svg>
<div class="t " style="left:1409.60px;top:710.30px;font-size:15px;color:#333;letter-spacing:-0.712px;">Icon Sets</div>
<svg class="r" style="left:1553px;top:714px" width="4" height="8" viewBox="0 0 4 8"><path d="M0 0L4 4 0 8z" fill="#333"/></svg>
<div class="t " style="left:1409.60px;top:740.80px;font-size:15px;color:#333;letter-spacing:-0.71px;">Clear Rules</div>
<svg class="r" style="left:1553px;top:744.5px" width="4" height="8" viewBox="0 0 4 8"><path d="M0 0L4 4 0 8z" fill="#333"/></svg>
<div class="t " style="left:1409.60px;top:769.80px;font-size:15px;color:#333;letter-spacing:-0.018px;">Manage Rules</div>
<div class="t " style="left:1409.60px;top:621.30px;font-size:15px;color:#fff4c8;letter-spacing:-0.34px;">Top/Bottom Rules</div>
<svg class="r" style="left:1553px;top:625px" width="4" height="8" viewBox="0 0 4 8"><path d="M0 0L4 4 0 8z" fill="#fff4c8"/></svg>
<svg class="r" style="left:1372px;top:590px" width="20" height="17" viewBox="0 0 20 17"><rect x="0.5" y="0.5" width="19" height="16" fill="#fff" stroke="#8890b0"/><rect x="1.5" y="1.5" width="5" height="4" fill="#f4f4fb"/><rect x="7.5" y="1.5" width="5" height="4" fill="#f5b860"/><rect x="13.5" y="1.5" width="5" height="4" fill="#f4f4fb"/><rect x="1.5" y="6.5" width="5" height="4" fill="#f5b860"/><rect x="7.5" y="6.5" width="5" height="4" fill="#eef2fa"/><rect x="13.5" y="6.5" width="5" height="4" fill="#f4f4fb"/><rect x="1.5" y="11.5" width="5" height="4" fill="#f4f4fb"/><rect x="7.5" y="11.5" width="5" height="4" fill="#eef2fa"/><rect x="13.5" y="11.5" width="5" height="4" fill="#f5b860"/><path d="M6.5 1v15M12.5 1v15M1 5.5h18M1 10.5h18" stroke="#b07a48" stroke-width="1"/></svg>
<svg class="r" style="left:1574px;top:588px" width="20" height="17" viewBox="0 0 20 17"><rect x="0.5" y="0.5" width="19" height="16" fill="#fff" stroke="#6a5040"/><rect x="1.5" y="1.5" width="5" height="4" fill="#fff8ee"/><rect x="7.5" y="1.5" width="5" height="4" fill="#f8c660"/><rect x="13.5" y="1.5" width="5" height="4" fill="#f2f2fb"/><rect x="1.5" y="6.5" width="5" height="4" fill="#ec5e52"/><rect x="7.5" y="6.5" width="5" height="4" fill="#f2eefa"/><rect x="13.5" y="6.5" width="5" height="4" fill="#e8f6e0"/><rect x="1.5" y="11.5" width="5" height="4" fill="#f5effa"/><rect x="7.5" y="11.5" width="5" height="4" fill="#eef2fa"/><rect x="13.5" y="11.5" width="5" height="4" fill="#98d048"/><path d="M6.5 1v15M12.5 1v15M1 5.5h18M1 10.5h18" stroke="#7a5a48" stroke-width="1"/></svg>
<svg class="r" style="left:1372px;top:619px" width="20" height="17" viewBox="0 0 20 17"><rect x="0.5" y="0.5" width="19" height="16" fill="#e8f0fa" stroke="#6d8a5a"/><rect x="1" y="1" width="6.5" height="15" fill="#8cc860"/><path d="M4.2 14.5V4M2.2 6.5l2-2.8 2 2.8" stroke="#164a0c" stroke-width="1.5" fill="none"/><rect x="12.5" y="1" width="6.5" height="15" fill="#a9c9ef"/><path d="M10 2.5v1.5M10 6v1.5M10 9.5v1.5M10 13v1.5" stroke="#8ca0c0"/><path d="M15.7 2.5V13M13.7 10.5l2 2.8 2-2.8" stroke="#2a5ea8" stroke-width="1.5" fill="none"/></svg>
<svg class="r" style="left:1372px;top:648px" width="20" height="22" viewBox="0 0 20 22"><rect x="0.6" y="0.6" width="18.8" height="20" rx="1" fill="#f2f5fb" stroke="#7d92bc" stroke-width="1.2"/><path d="M1 7.2h18M1 13.8h18" stroke="#9fb0d0"/><g fill="#5b82c2"><rect x="3" y="3" width="6" height="2.4"/><rect x="3" y="9.4" width="10" height="2.4"/><rect x="3" y="16" width="13.5" height="2.4"/></g></svg>
<svg class="r" style="left:1372px;top:678px" width="20" height="21" viewBox="0 0 20 21"><rect x="0.6" y="0.6" width="18.8" height="6.8" fill="#6ab870"/><rect x="0.6" y="7.2" width="18.8" height="6.6" fill="#f3df6e"/><rect x="0.6" y="13.6" width="18.8" height="6.8" fill="#e85a5a"/><rect x="0.6" y="0.6" width="18.8" height="19.8" rx="1.5" fill="none" stroke="#9a8a8a" stroke-width="1.1"/></svg>
<svg class="r" style="left:1372px;top:707px" width="20" height="20" viewBox="0 0 20 20"><path d="M10 1L19 10.5h-5V19H6v-8.5H1z" fill="#8cc850" stroke="#5a9a30" stroke-width="1"/></svg>
<svg class="r" style="left:1372px;top:738px" width="22" height="21" viewBox="0 0 22 21"><rect x="0.5" y="0.5" width="16" height="12.5" fill="#fff" stroke="#8890a8"/><rect x="1" y="4.8" width="5" height="3.8" fill="#ee6a6a"/><rect x="6" y="1" width="5" height="3.8" fill="#f7c870"/><path d="M6 1v11.5M11 1v11.5M1 4.8h15.5M1 8.6h15.5" stroke="#b89090" stroke-width=".9"/><g transform="rotate(-40 14 14)"><rect x="7.5" y="10" width="7" height="7.5" rx="1.5" fill="#5a86d0" stroke="#3a5ea0" stroke-width=".8"/><rect x="14" y="10" width="6.5" height="7.5" rx="1.5" fill="#ee8088" stroke="#c05060" stroke-width=".8"/></g></svg>
<svg class="r" style="left:1372px;top:767px" width="22" height="21" viewBox="0 0 22 21"><rect x="0.5" y="0.5" width="16" height="12.5" fill="#fff" stroke="#8890a8"/><rect x="1" y="4.8" width="5" height="3.8" fill="#ee6a6a"/><rect x="6" y="1" width="5" height="3.8" fill="#f7c870"/><path d="M6 1v11.5M11 1v11.5M1 4.8h15.5M1 8.6h15.5" stroke="#b89090" stroke-width=".9"/><circle cx="15" cy="14.5" r="5" fill="#8a9ab8" stroke="#5a6a88" stroke-dasharray="1.7 1.2" stroke-width="2.2"/><circle cx="15" cy="14.5" r="1.9" fill="#fff"/></svg>
<div class="r" style="left:1179px;top:614px;width:184px;height:178px;background:#fff;border:1px solid #bcbcbc;box-sizing:border-box"></div>
<div class="t " style="left:1228.20px;top:623.30px;font-size:15px;color:#333;letter-spacing:0.157px;">Top 10 Items...</div>
<svg class="r" style="left:1190px;top:622px" width="21" height="16" viewBox="0 0 21 16"><rect x="0.5" y="0.5" width="20" height="15" fill="#e8eef8" stroke="#8ca0c0"/><rect x="1" y="1" width="6" height="14" fill="#92cc62"/><path d="M3.5 14V3.5M1.5 6l2-3 2 3" stroke="#17400f" stroke-width="1.3" fill="none"/><text x="7.5" y="12" font-size="8.5" font-weight="bold" fill="#2a4a80" font-family="Liberation Sans" letter-spacing="-.6">10</text></svg>
<div class="t " style="left:1228.20px;top:652.30px;font-size:15px;color:#333;letter-spacing:-0.04px;">Top 10 %...</div>
<svg class="r" style="left:1190px;top:651px" width="21" height="16" viewBox="0 0 21 16"><rect x="0.5" y="0.5" width="20" height="15" fill="#e8eef8" stroke="#8ca0c0"/><rect x="1" y="1" width="6" height="14" fill="#92cc62"/><path d="M3.5 14V3.5M1.5 6l2-3 2 3" stroke="#17400f" stroke-width="1.3" fill="none"/><text x="7.5" y="12.5" font-size="10" font-weight="bold" fill="#2a4a80" font-family="Liberation Sans">%</text></svg>
<div class="t " style="left:1228.20px;top:681.30px;font-size:15px;color:#333;letter-spacing:0.329px;">Bottom 10 Items...</div>
<svg class="r" style="left:1190px;top:680px" width="21" height="16" viewBox="0 0 21 16"><rect x="0.5" y="0.5" width="20" height="15" fill="#e8eef8" stroke="#8ca0c0"/><rect x="1" y="1" width="6" height="14" fill="#a9c9ef"/><path d="M3.5 2v10.5M1.5 10l2 3 2-3" stroke="#1d4f99" stroke-width="1.3" fill="none"/><text x="7.5" y="12" font-size="8.5" font-weight="bold" fill="#2a4a80" font-family="Liberation Sans" letter-spacing="-.6">10</text></svg>
<div class="t " style="left:1228.20px;top:710.30px;font-size:15px;color:#333;letter-spacing:0.223px;">Bottom 10 %...</div>
<svg class="r" style="left:1190px;top:709px" width="21" height="16" viewBox="0 0 21 16"><rect x="0.5" y="0.5" width="20" height="15" fill="#e8eef8" stroke="#8ca0c0"/><rect x="1" y="1" width="6" height="14" fill="#a9c9ef"/><path d="M3.5 2v10.5M1.5 10l2 3 2-3" stroke="#1d4f99" stroke-width="1.3" fill="none"/><text x="7.5" y="12.5" font-size="10" font-weight="bold" fill="#2a4a80" font-family="Liberation Sans">%</text></svg>
<div class="t " style="left:1228.20px;top:739.30px;font-size:15px;color:#333;letter-spacing:-0.04px;">Above Average...</div>
<svg class="r" style="left:1190px;top:738px" width="21" height="16" viewBox="0 0 21 16"><rect x="0.5" y="0.5" width="20" height="15" fill="#e8eef8" stroke="#8ca0c0"/><rect x="1" y="1" width="6" height="14" fill="#92cc62"/><path d="M3.5 14V3.5M1.5 6l2-3 2 3" stroke="#17400f" stroke-width="1.3" fill="none"/><path d="M9.5 3.2h7.5" stroke="#2a4a80" stroke-width="1.1"/><path d="M10 6l6 7.5M16 6l-6 7.5M9.5 6h2M14.5 6h2M9.5 13.5h2M14.5 13.5h2" stroke="#2a4a80" stroke-width="1.1"/></svg>
<div class="t " style="left:1228.20px;top:768.30px;font-size:15px;color:#333;letter-spacing:0.073px;">Below Average...</div>
<svg class="r" style="left:1190px;top:767px" width="21" height="16" viewBox="0 0 21 16"><rect x="0.5" y="0.5" width="20" height="15" fill="#e8eef8" stroke="#8ca0c0"/><rect x="1" y="1" width="6" height="14" fill="#a9c9ef"/><path d="M3.5 2v10.5M1.5 10l2 3 2-3" stroke="#1d4f99" stroke-width="1.3" fill="none"/><path d="M9.5 3.2h7.5" stroke="#2a4a80" stroke-width="1.1"/><path d="M10 6l6 7.5M16 6l-6 7.5M9.5 6h2M14.5 6h2M9.5 13.5h2M14.5 13.5h2" stroke="#2a4a80" stroke-width="1.1"/></svg>
<svg class="r" style="left:1500px;top:600px" width="220" height="200" viewBox="0 0 220 200"><polygon points="40.4,43.4 121.3,85.2 114.7,93.2 197.1,158.8 186.8,170.9 103.9,100.7 97.7,113.4" fill="none" stroke="#e0222c" stroke-width="4.2" stroke-miterlimit="12"/></svg>
</body></html>
